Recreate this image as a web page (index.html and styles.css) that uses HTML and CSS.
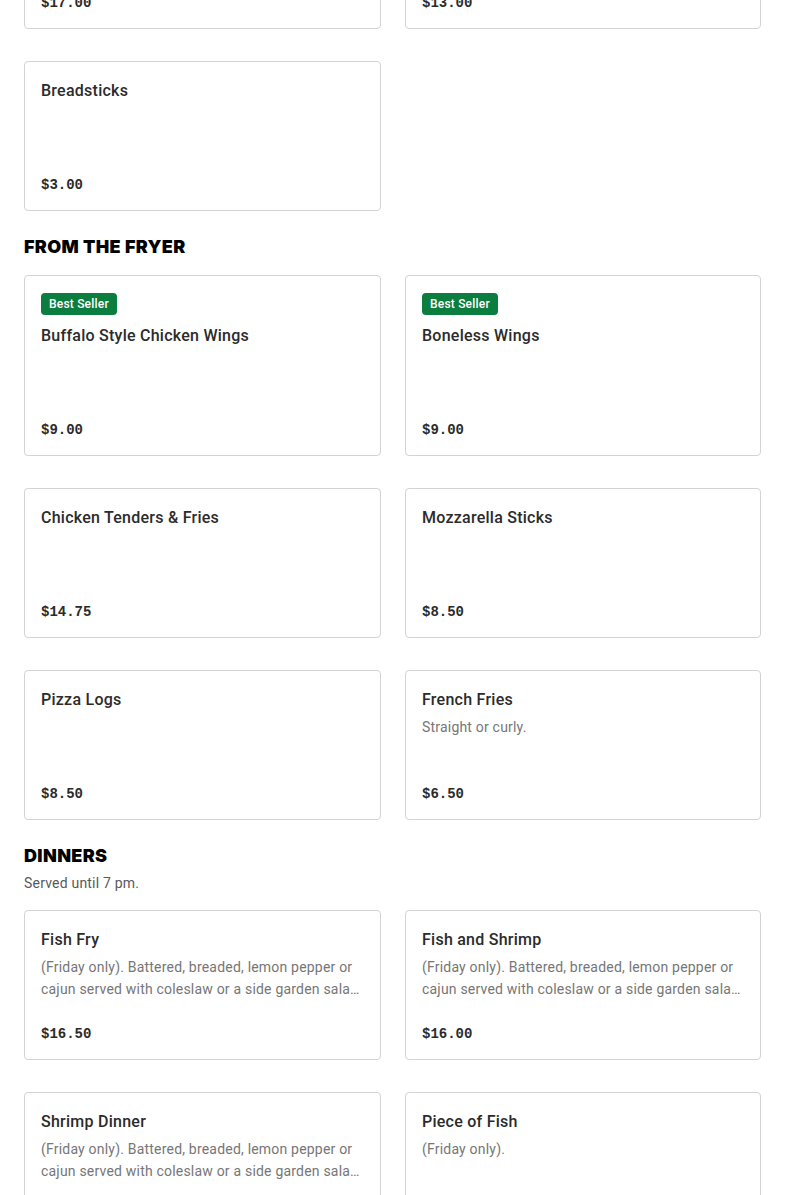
FILE: index.html
```html
<!DOCTYPE html>
<html lang="en">
<head>
<meta charset="utf-8">
<title>Menu</title>
<link rel="stylesheet" href="styles.css">
</head>
<body>
<main class="menu">
  <div class="grid grid-first">
    <article class="card">
      <h3 class="title">Cheese Pizza</h3>
      <p class="desc"></p>
      <p class="price">$17.00</p>
    </article>
    <article class="card">
      <h3 class="title">Garlic Bread</h3>
      <p class="desc"></p>
      <p class="price">$13.00</p>
    </article>
    <article class="card">
      <h3 class="title">Breadsticks</h3>
      <p class="desc"></p>
      <p class="price">$3.00</p>
    </article>
  </div>

  <section class="section">
    <h2 class="section-title">FROM THE FRYER</h2>
    <div class="grid">
      <article class="card">
        <span class="badge">Best Seller</span>
        <h3 class="title">Buffalo Style Chicken Wings</h3>
        <p class="desc"></p>
        <p class="price">$9.00</p>
      </article>
      <article class="card">
        <span class="badge">Best Seller</span>
        <h3 class="title">Boneless Wings</h3>
        <p class="desc"></p>
        <p class="price">$9.00</p>
      </article>
      <article class="card">
        <h3 class="title">Chicken Tenders &amp; Fries</h3>
        <p class="desc"></p>
        <p class="price">$14.75</p>
      </article>
      <article class="card">
        <h3 class="title">Mozzarella Sticks</h3>
        <p class="desc"></p>
        <p class="price">$8.50</p>
      </article>
      <article class="card">
        <h3 class="title">Pizza Logs</h3>
        <p class="desc"></p>
        <p class="price">$8.50</p>
      </article>
      <article class="card">
        <h3 class="title">French Fries</h3>
        <p class="desc">Straight or curly.</p>
        <p class="price">$6.50</p>
      </article>
    </div>
  </section>

  <section class="section">
    <h2 class="section-title">DINNERS</h2>
    <p class="section-desc">Served until 7 pm.</p>
    <div class="grid">
      <article class="card">
        <h3 class="title">Fish Fry</h3>
        <p class="desc">(Friday only). Battered, breaded, lemon pepper or cajun served with coleslaw or a side garden salad and fries.</p>
        <p class="price">$16.50</p>
      </article>
      <article class="card">
        <h3 class="title">Fish and Shrimp</h3>
        <p class="desc">(Friday only). Battered, breaded, lemon pepper or cajun served with coleslaw or a side garden salad and fries.</p>
        <p class="price">$16.00</p>
      </article>
      <article class="card">
        <h3 class="title">Shrimp Dinner</h3>
        <p class="desc">(Friday only). Battered, breaded, lemon pepper or cajun served with coleslaw or a side garden salad and fries.</p>
        <p class="price">$15.00</p>
      </article>
      <article class="card">
        <h3 class="title">Piece of Fish</h3>
        <p class="desc">(Friday only).</p>
        <p class="price">$5.00</p>
      </article>
    </div>
  </section>
</main>
</body>
</html>
```

FILE: styles.css
```css
* { box-sizing: border-box; }

html, body {
  margin: 0;
  padding: 0;
  background: #ffffff;
}

body {
  font-family: "Roboto", "Liberation Sans", sans-serif;
  color: #2b2b2b;
  overflow: hidden;
}

.menu {
  padding: 0 24px;
}

.grid {
  display: grid;
  grid-template-columns: 357px 356px;
  column-gap: 24px;
  row-gap: 32px;
}

.grid-first {
  margin-top: -121px;
}

.section {
  margin-top: 24px;
}

.section-title {
  margin: 0 0 16px;
  font-family: "Inter", "Liberation Sans", sans-serif;
  font-weight: 900;
  font-size: 18px;
  line-height: 24px;
  letter-spacing: 0.35px;
  color: #000000;
}

.section-desc {
  margin: -12px 0 16px;
  font-size: 14px;
  line-height: 22px;
  letter-spacing: 0.2px;
  color: #595959;
}

.card {
  display: flex;
  flex-direction: column;
  align-items: flex-start;
  border: 1px solid #d3d3d3;
  border-radius: 4px;
  padding: 17px 16px 13px;
  background: #ffffff;
}

.badge {
  display: inline-block;
  height: 22px;
  line-height: 22px;
  padding: 0 8px;
  margin-bottom: 9px;
  border-radius: 4px;
  background: #0b7d3e;
  color: #ffffff;
  font-size: 12px;
  font-weight: 500;
  letter-spacing: 0.2px;
}

.title {
  margin: 0;
  font-size: 16px;
  line-height: 24px;
  font-weight: 500;
  letter-spacing: 0.25px;
  color: #2b2b2b;
}

.desc {
  margin: 4px 0 0;
  min-height: 44px;
  width: 100%;
  font-size: 14px;
  line-height: 22px;
  letter-spacing: 0.2px;
  color: #767676;
  display: -webkit-box;
  -webkit-line-clamp: 2;
  -webkit-box-orient: vertical;
  overflow: hidden;
}

.price {
  margin: 22px 0 0;
  font-family: "Liberation Mono", "DejaVu Sans Mono", monospace;
  font-weight: bold;
  font-size: 14px;
  line-height: 24px;
  color: #2b2b2b;
}
```
